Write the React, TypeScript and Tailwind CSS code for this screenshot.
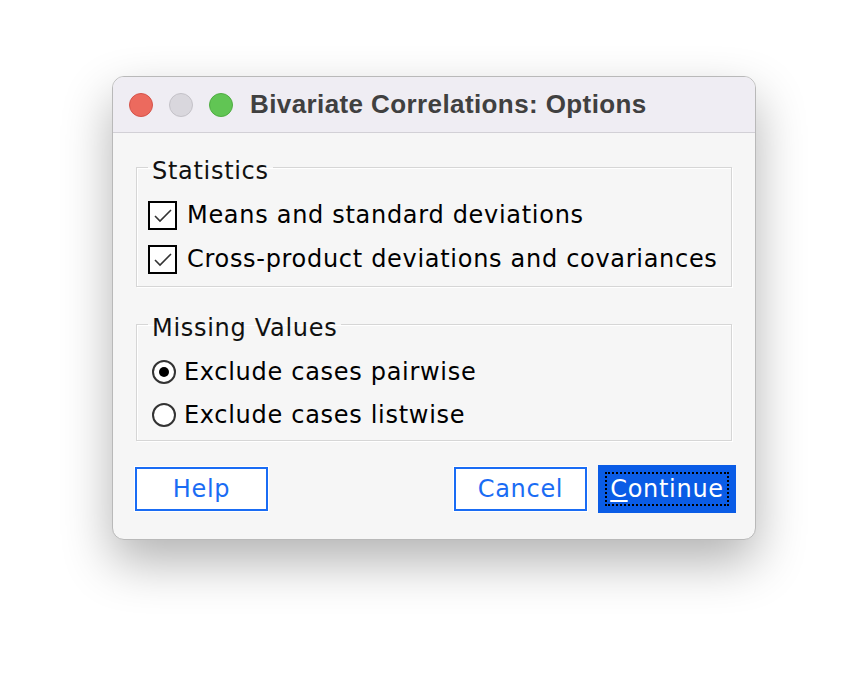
import React from "react";

const font = { fontFamily: '"DejaVu Sans", "Lucida Grande", sans-serif' };

function Check() {
  return (
    <div className="w-[29px] h-[29px] border-2 border-black bg-white flex items-center justify-center shrink-0">
      <svg width="20" height="16" viewBox="0 0 20 16">
        <path d="M2 8 L7 13 L18 2" fill="none" stroke="#333" strokeWidth="1.6" />
      </svg>
    </div>
  );
}

function Radio({ on }: { on?: boolean }) {
  return (
    <div className="w-[24px] h-[24px] rounded-full border-2 border-[#333] bg-white flex items-center justify-center shrink-0">
      {on && <div className="w-[10px] h-[10px] rounded-full bg-black" />}
    </div>
  );
}

function Group({ title, className, children }: { title: string; className: string; children: React.ReactNode }) {
  return (
    <fieldset className={"border border-[#d6d6d6] shadow-[1px_1px_0_#ffffff,inset_1px_1px_0_#ffffff] pl-[11px] " + className}>
      <legend className="ml-0 px-[4px] text-[24px] leading-[24px] tracking-[0.7px] text-[#111]">
        <span className="relative top-[4px]">{title}</span>
      </legend>
      {children}
    </fieldset>
  );
}

export default function App() {
  return (
    <div className="w-[868px] h-[688px] bg-white pt-[76px] pl-[112px]" style={font}>
      <div className="w-[644px] h-[464px] rounded-[12px] border border-[#b9b9b9] bg-[#f6f6f6] overflow-hidden shadow-[0_22px_50px_rgba(0,0,0,0.3)] flex flex-col">
        <div className="h-[56px] bg-[#efedf3] border-b border-[#d2d0d6] flex items-center pl-[16px] shrink-0">
          <div className="w-[24px] h-[24px] rounded-full bg-[#ec6a5e] border border-[#d5534a]" />
          <div className="w-[24px] h-[24px] rounded-full bg-[#d9d7dd] border border-[#c4c2c8] ml-[16px]" />
          <div className="w-[24px] h-[24px] rounded-full bg-[#61c554] border border-[#4fad42] ml-[16px]" />
          <div className="ml-[17px] text-[26px] tracking-[0.4px] font-bold text-[#404040]" style={{ fontFamily: '"Liberation Sans", Arial, sans-serif' }}>
            Bivariate Correlations: Options
          </div>
        </div>
        <div className="px-[23px] pt-[22px] flex flex-col">
          <Group title="Statistics" className="pt-[22px] pb-[12px]">
            <div className="flex flex-col gap-[15px]">
              <div className="flex items-center gap-[10px] text-[24px] leading-[29px] tracking-[0.7px] text-black">
                <Check />
                <span>Means and standard deviations</span>
              </div>
              <div className="flex items-center gap-[10px] text-[24px] leading-[29px] tracking-[0.7px] text-black">
                <Check />
                <span>Cross-product deviations and covariances</span>
              </div>
            </div>
          </Group>
          <div className="h-[25px]" />
          <Group title="Missing Values" className="pt-[24px] pb-[13px]">
            <div className="flex flex-col gap-[19px] pl-[4px]">
              <div className="flex items-center gap-[8px] text-[24px] leading-[24px] tracking-[0.7px] text-black">
                <Radio on />
                <span>Exclude cases pairwise</span>
              </div>
              <div className="flex items-center gap-[8px] text-[24px] leading-[24px] tracking-[0.7px] text-black">
                <Radio />
                <span>Exclude cases listwise</span>
              </div>
            </div>
          </Group>
          <div className="flex items-center mt-[24px] -ml-[2px]">
            <div className="w-[135px] h-[46px] bg-white border-[3px] border-white outline-2 outline-[#1a6cf4] -outline-offset-[3px] flex items-center justify-center text-[#1a6cf4] text-[24px] tracking-[0.7px]">
              Help
            </div>
            <div className="flex-1" />
            <div className="w-[135px] h-[46px] bg-white border-[3px] border-white outline-2 outline-[#1a6cf4] -outline-offset-[3px] flex items-center justify-center text-[#1a6cf4] text-[24px] tracking-[0.7px]">
              Cancel
            </div>
            <div className="w-[138px] h-[48px] bg-[#0a5ce6] ml-[10px] mr-[-4px] p-[7px]">
              <div className="w-full h-full border-2 border-dotted border-black flex items-center justify-center text-white text-[24px] tracking-[0.7px]">
                <span><span className="underline underline-offset-[3px]">C</span>ontinue</span>
              </div>
            </div>
          </div>
        </div>
      </div>
    </div>
  );
}
